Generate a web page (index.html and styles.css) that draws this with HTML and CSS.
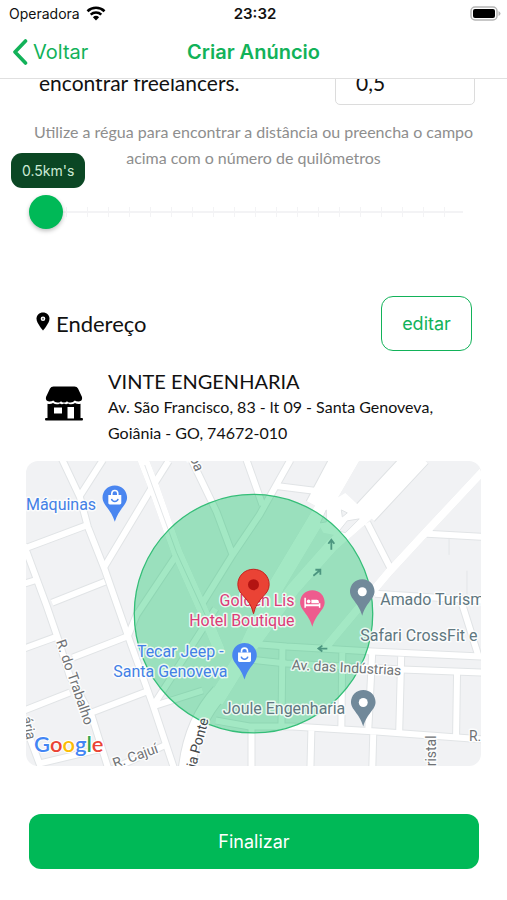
FILE: index.html
```html
<!DOCTYPE html>
<html lang="pt-BR">
<head>
    <meta charset="UTF-8">
    <meta name="viewport" content="width=device-width, initial-scale=1.0">
    <title>Criar Anúncio</title>
    <link rel="stylesheet" href="styles.css">
</head>
<body>
<header class="header">
    <div class="status-bar">
        <div class="carrier">
            <span>Operadora</span>
            <svg width="20" height="15" viewBox="0 0 20 15">
                <path d="M1.5 5.2a12.3 12.3 0 0 1 17 0" fill="none" stroke="#000" stroke-width="2.6"/>
                <path d="M4.7 8.6a7.7 7.7 0 0 1 10.6 0" fill="none" stroke="#000" stroke-width="2.5"/>
                <path d="M10 14.5L6.9 11.3a4.5 4.5 0 0 1 6.2 0z"/>
            </svg>
        </div>
        <span class="clock">23:32</span>
        <svg class="battery" width="31" height="15" viewBox="0 0 31 15">
            <rect x="1" y="1" width="26" height="13" rx="4" fill="#fff" stroke="#b5b5b5" stroke-width="1.5"/>
            <rect x="3" y="3" width="22" height="9" rx="2"/>
            <path d="M28.5 5v5q2-1 2-2.5t-2-2.5z" fill="#b5b5b5"/>
        </svg>
    </div>
    <nav class="nav-bar">
        <a href="#" class="back-link">
            <svg width="16" height="26" viewBox="0 0 16 26">
                <path d="M13.5 2L3 13l10.5 11" fill="none" stroke="#12b259" stroke-width="3.6" stroke-linecap="round" stroke-linejoin="round"/>
            </svg>
            Voltar
        </a>
        <h1>Criar Anúncio</h1>
    </nav>
</header>

<main>
    <div class="distance-row">
        <label for="distance">encontrar freelancers.</label>
        <input type="text" id="distance" value="0,5">
    </div>
    <p class="hint">Utilize a régua para encontrar a distância ou preencha o campo acima com o número de quilômetros</p>

    <div class="slider">
        <output class="tooltip" for="range">0.5km's</output>
        <input type="range" id="range" min="0.5" max="10" step="0.5" value="0.5" aria-label="Distância">
    </div>

    <div class="address-header">
        <h2>
            <svg width="14" height="19" viewBox="0 0 14 19">
                <path d="M7 0.5C3.3 0.5 0.5 3.2 0.5 6.7C0.5 11 7 18.5 7 18.5S13.5 11 13.5 6.7C13.5 3.2 10.7 0.5 7 0.5z"/>
                <circle cx="7" cy="6.7" r="2.3" fill="#fff"/>
                <circle cx="7" cy="6.7" r="1" fill="#777"/>
            </svg>
            Endereço
        </h2>
        <button type="button" class="edit-btn">editar</button>
    </div>

    <div class="place">
        <svg width="38" height="36" viewBox="0 0 38 36">
            <path d="M8.500 .5h21q2.500 0 3.500 2l4 8.500q.8 4-3.200 4.500-2.800 0-4-1-2 2.600-5.400 2-1.400 0-2.400-1.200-1 1.200-3 1.200t-3-1.200q-1 1.200-2.400 1.200-3.400.6-5.400-2-1.200 1-4 1Q.2 15 1 11l4-8.500q1-2 3.500-2z"/>
            <path fill-rule="evenodd" d="M2.500 17.700q3.500.6 5.500-.8 3.200 2.600 6.900.6 2.100 1.500 4.100 0 2 1.500 4.100 0 3.700 2 6.900-.6 2 1.400 5.500.8V32h1.500q1 0 1 1.300t-1 1.300H1q-1 0-1-1.300T1 32h1.500zM9 21.500v6h8v-6zM22.500 21v11.500H29V21z"/>
        </svg>
        <div class="place-info">
            <h3>VINTE ENGENHARIA</h3>
            <p>Av. São Francisco, 83 - lt 09 - Santa Genoveva, Goiânia - GO, 74672-010</p>
        </div>
    </div>

    <div class="map">
        <svg viewBox="0 0 456 306" preserveAspectRatio="xMidYMid slice">
            <defs>
                <path id="pin" d="M0-12.5C-7-12.5-12.3-7-12.3-.4-12.3 7.500-4 10.500 0 24 4 10.500 12.300 7.500 12.300-.4 12.300-7 7-12.500 0-12.500z"/>
                <g id="shop">
                    <use href="#pin" fill="#4a86f0"/>
                    <path d="M-6.5-3h13v8q0 1.500-1.500 1.500H-5q-1.500 0-1.500-1.500z" fill="#fff"/>
                    <path d="M-3-3v-1.500a3 3 0 0 1 6 0V-3" fill="none" stroke="#fff" stroke-width="1.6"/>
                    <path d="M-3.300 1a3.400 3.400 0 0 0 6.600 0" fill="none" stroke="#4a86f0" stroke-width="1.5"/>
                </g>
                <g id="spot">
                    <use href="#pin" fill="#71899a"/>
                    <circle r="4.5" fill="#fff"/>
                </g>
                <g id="streets">
                    <path d="M36-2L54 36 62 66 79 109 101 172 127 244 149 310"/>
                    <path d="M77-1L54 35M143 0L126 27 78 107M62 64L-2 88M-2 84L21 146 32 178 44 216 66 256 83 310"/>
                    <path d="M79 121L26 142M-2 123L11 119M-2 188L31 176M47 197L101 176M-2 250L44 232M66 252L121 231M-2 262L16 310M14 303L77 288M84 310L139 285M127 246L177 230"/>
                    <path d="M165-3L191 51 207 94M265-1L234 54 207 94 176 144M151 94L111 154 101 178M221-1L237 44M251 25L299 31M127 246L190 148"/>
                    <path d="M342 62L366 109M402 73L458 76M350 133L458 140M436 140L453 194"/>
                    <path d="M224 183L261 186 347 191 458 196M224 199L261 203 377 209 458 212M190 260L224 266 267 266 351 271 458 279"/>
                    <path d="M257 187L256 266M317 192L316 270M347 192L343 270M376 196L374 272M432 212L431 277M226 268V310M286 270L285 310M348 274L347 310"/>
                </g>
                <g id="avenues">
                    <path d="M458 10L401 71 364 111 337 143 300 187" stroke-width="8"/>
                    <path d="M117-2L128 26 151 91 176 147 194 190" stroke-width="11"/>
                    <path d="M327-4L290 60 251 125 218 195 190 240" stroke-width="16"/>
                    <path d="M393-8L341 54 307 84 268 128 226 185" stroke-width="13"/>
                </g>
            </defs>

            <rect width="456" height="306" fill="#f1f2f4"/>
            <use href="#streets" class="street-edge"/>
            <use href="#avenues" class="edge"/>
            <path d="M194 232Q166 262 161 310" class="edge wide"/>
            <path d="M318-3L292 46M394-6L340 52" class="edge wider"/>
            <use href="#streets" class="street"/>
            <use href="#avenues" class="road"/>
            <path d="M194 232Q166 262 161 310" class="road wide"/>
            <path d="M318-3L292 46M394-6L340 52" class="road wider"/>
            <path d="M300 44L320 32 334 45 347 46 340 64 318 76 298 72 290 58z" fill="#fff"/>
            <path d="M316 49l6 3-5 4zM314 70l8-10 12-2-14 14zM295 62l6-13v12z" fill="#f1f2f4" stroke="#e0e3e5"/>
            <path d="M119 4L151 92 184 164M424 77v17M442 110v30" class="lane"/>

            <circle cx="228" cy="153" r="119.5" fill="#00bf5c" fill-opacity=".36" stroke="#35be78" stroke-width="1.3"/>
            <g fill="none" stroke="#4c9680" stroke-width="1.8">
                <path d="M306 89v-9M303 83l3-4 3 4M288 115l6-5M290 109l5 0 0 5M302 188h-9M297 185l-4 3 4 3"/>
            </g>

            <g class="label road-label">
                <text transform="translate(164 -3) rotate(68)">pa</text>
                <text transform="translate(30 181) rotate(71)">R. do Trabalho</text>
                <text transform="translate(89 308) rotate(-20)">R. Cajuí</text>
                <text transform="translate(170 308) rotate(-75)" class="dark">ia Ponte</text>
                <text transform="translate(-4 257) rotate(78)">ária</text>
                <text transform="translate(266 209) rotate(3)">Av. das Indústrias</text>
                <text transform="translate(411 306) rotate(-90)">ristal</text>
                <text x="444" y="281">R.</text>
            </g>
            <g class="label blue">
                <text x="0" y="49">Máquinas</text>
                <text x="198" y="196" text-anchor="end">Tecar Jeep -</text>
                <text x="202" y="216" text-anchor="end">Santa Genoveva</text>
            </g>
            <g class="label pink">
                <text x="269" y="145" text-anchor="end">Golden Lis</text>
                <text x="269" y="165" text-anchor="end">Hotel Boutique</text>
            </g>
            <g class="label gray">
                <text x="355" y="144">Amado Turismo</text>
                <text x="335" y="180">Safari CrossFit e</text>
                <text x="320" y="254" text-anchor="end">Joule Engenharia</text>
            </g>

            <use href="#shop" x="89" y="37"/>
            <use href="#shop" x="219" y="195"/>
            <use href="#spot" x="337" y="131"/>
            <use href="#spot" x="338" y="242"/>
            <g transform="translate(287 142)">
                <use href="#pin" fill="#ee5b8e"/>
                <path d="M-8-5h1.500v6.500H6.500V-1q0-2-2-2H-1v3.500h9V5H6.500V3.500h-13V5H-8z" fill="#fff"/>
                <circle cx="-3.700" cy="-1.300" r="1.800" fill="#fff"/>
            </g>
            <path d="M228 108.500c-9 0-15.700 6.800-15.700 15.300 0 11.200 12 12.200 15.700 29.200 3.700-17 15.700-18 15.700-29.200 0-8.500-6.700-15.300-15.700-15.300z" fill="#ea4335" stroke="#c5221f"/>
            <circle cx="228" cy="124" r="5.5" fill="#b31412"/>
            <text x="8" y="292" class="google"><tspan fill="#4285f4">G</tspan><tspan fill="#ea4335">o</tspan><tspan fill="#fbbc05">o</tspan><tspan fill="#4285f4">g</tspan><tspan fill="#34a853">l</tspan><tspan fill="#ea4335">e</tspan></text>
        </svg>
    </div>

    <button type="submit" class="submit-btn">Finalizar</button>
</main>
</body>
</html>
```
FILE: styles.css
```css
* {
    box-sizing: border-box;
}

body {
    margin: 0;
    background-color: #fff;
    color: #111;
    font-family: Lato, "Open Sans", sans-serif;
}

h1, h2, h3, p {
    margin: 0;
    font-weight: normal;
}

svg {
    display: block;
    flex-shrink: 0;
}

/* Header */
.header {
    position: sticky;
    top: 0;
    z-index: 2;
    background-color: #fff;
    border-bottom: 1px solid #e0e0e0;
    font-family: Inter, sans-serif;
}

.status-bar, .nav-bar {
    display: grid;
    grid-template-columns: 1fr auto 1fr;
    align-items: center;
}

.status-bar {
    height: 26px;
    padding: 0 6px 0 9px;
    font-size: 14px;
}

.carrier {
    display: flex;
    align-items: center;
    gap: 6px;
}

.clock {
    font-size: 15px;
    font-weight: 600;
}

.battery {
    justify-self: end;
}

.nav-bar {
    height: 52px;
    padding: 0 12px;
    color: #12b259;
}

.back-link {
    display: flex;
    align-items: center;
    gap: 5px;
    color: #12b259;
    font-size: 20px;
    text-decoration: none;
}

.nav-bar h1 {
    font-size: 20px;
    font-weight: 600;
}

/* Content */
main {
    display: flex;
    flex-direction: column;
    margin-top: -18px;
    padding: 0 26px 31px;
}

.distance-row {
    display: flex;
    justify-content: space-between;
    align-items: center;
    padding: 0 6px 0 13px;
    font-size: 21px;
}

.distance-row input {
    width: 140px;
    height: 44px;
    padding: 0 20px 2px;
    border: 1px solid #dcdcdc;
    border-radius: 5px;
    background-color: #fff;
    color: #111;
    font: inherit;
}

.distance-row label {
    padding-bottom: 2px;
}

.hint {
    margin-top: 14px;
    color: #8e8e8e;
    font-size: 16px;
    line-height: 26px;
    text-align: center;
}

.slider {
    position: relative;
    margin: 24px 18px 0 3px;
}

.slider input {
    display: block;
    width: 100%;
    height: 34px;
    margin: 0;
    appearance: none;
    background:
        linear-gradient(#f3f3f5, #f3f3f5) center / 100% 2px no-repeat,
        repeating-linear-gradient(90deg, transparent 0 20px, #f3f3f5 20px 21px) 17px center / 100% 10px no-repeat;
}

.slider input::-webkit-slider-thumb {
    width: 34px;
    height: 34px;
    appearance: none;
    border-radius: 50%;
    background-color: #00b957;
    box-shadow: 0 2px 4px rgba(0, 0, 0, 0.25);
}

.tooltip {
    position: absolute;
    bottom: 41px;
    left: -18px;
    padding: 0 11px;
    border-radius: 11px;
    background-color: #0b4724;
    color: #cdebd6;
    font-family: Inter, sans-serif;
    font-size: 14px;
    line-height: 35px;
}

.address-header {
    display: flex;
    justify-content: space-between;
    align-items: center;
    margin-top: 67px;
    padding: 0 9px 0 10px;
}

.address-header h2 {
    display: flex;
    align-items: center;
    gap: 6px;
    font-size: 22px;
}

.address-header h2 svg {
    margin-bottom: 4px;
}

.edit-btn {
    width: 91px;
    height: 55px;
    border: 1px solid #12b259;
    border-radius: 12px;
    background-color: #fff;
    color: #12b259;
    font-family: Inter, sans-serif;
    font-size: 18px;
}

.place {
    display: flex;
    align-items: center;
    gap: 25px;
    margin-top: 17px;
    padding: 0 19px;
}

.place > svg {
    margin-bottom: 6px;
}

.place-info {
    line-height: 26px;
}

.place-info h3 {
    font-size: 20px;
}

.place-info p {
    font-size: 16px;
}

/* Map */
.map {
    margin-top: 15px;
    overflow: hidden;
    border-radius: 12px;
}

.map svg {
    width: 100%;
}

.street-edge, .edge, .street, .road, .lane {
    fill: none;
}

.street-edge {
    stroke: #e1e4e6;
    stroke-width: 8px;
}

.street {
    stroke: #fff;
    stroke-width: 6px;
}

.edge {
    stroke: #dfe2e4;
}

.road {
    stroke: #fff;
}

.edge.wide {
    stroke-width: 18px;
}

.road.wide {
    stroke-width: 16px;
}

.edge.wider {
    stroke-width: 26px;
}

.road.wider {
    stroke-width: 24px;
}

.lane {
    stroke: #e3e6e8;
}

.label {
    font-family: Roboto, sans-serif;
    font-size: 16px;
    paint-order: stroke;
    stroke: rgba(255, 255, 255, 0.8);
    stroke-width: 3px;
    stroke-linejoin: round;
}

.road-label {
    fill: #6f7275;
    font-size: 14px;
}

.dark {
    fill: #45484b;
}

.blue {
    fill: #4380e6;
}

.pink {
    fill: #dc3c78;
}

.gray {
    fill: #607780;
}

.google {
    font-family: Lato, sans-serif;
    font-size: 22px;
    font-weight: 600;
    paint-order: stroke;
    stroke: #fff;
    stroke-width: 2px;
}

.submit-btn {
    height: 55px;
    margin: 48px 2px 0 3px;
    border: none;
    border-radius: 12px;
    background-color: #00b957;
    color: #fff;
    font-family: Inter, sans-serif;
    font-size: 18px;
}
```
